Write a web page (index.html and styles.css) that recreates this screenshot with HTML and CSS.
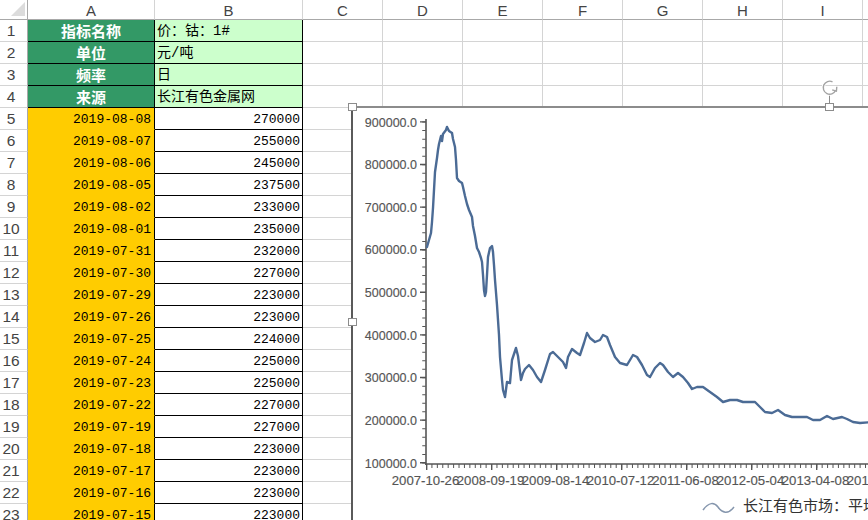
FILE: index.html
```html
<!DOCTYPE html>
<html lang="zh">
<head>
<meta charset="utf-8">
<title>Sheet</title>
<link rel="stylesheet" href="styles.css">
</head>
<body>
<div class="page">
  <div class="sheet">
    <div class="ch corner"></div>
    <div class="ch">A</div><div class="ch">B</div><div class="ch">C</div><div class="ch">D</div><div class="ch">E</div><div class="ch">F</div><div class="ch">G</div><div class="ch">H</div><div class="ch">I</div><div class="ch"></div>

    <div class="rh">1</div><div class="c hd">指标名称</div><div class="c info">价：钴：1#</div>
    <div class="empty"></div>
    <div class="rh">2</div><div class="c hd">单位</div><div class="c info">元/吨</div>
    <div class="rh">3</div><div class="c hd">频率</div><div class="c info">日</div>
    <div class="rh">4</div><div class="c hd">来源</div><div class="c info">长江有色金属网</div>
    <div class="rh">5</div><div class="c dt">2019-08-08</div><div class="c num">270000</div>
    <div class="rh">6</div><div class="c dt">2019-08-07</div><div class="c num">255000</div>
    <div class="rh">7</div><div class="c dt">2019-08-06</div><div class="c num">245000</div>
    <div class="rh">8</div><div class="c dt">2019-08-05</div><div class="c num">237500</div>
    <div class="rh">9</div><div class="c dt">2019-08-02</div><div class="c num">233000</div>
    <div class="rh">10</div><div class="c dt">2019-08-01</div><div class="c num">235000</div>
    <div class="rh">11</div><div class="c dt">2019-07-31</div><div class="c num">232000</div>
    <div class="rh">12</div><div class="c dt">2019-07-30</div><div class="c num">227000</div>
    <div class="rh">13</div><div class="c dt">2019-07-29</div><div class="c num">223000</div>
    <div class="rh">14</div><div class="c dt">2019-07-26</div><div class="c num">223000</div>
    <div class="rh">15</div><div class="c dt">2019-07-25</div><div class="c num">224000</div>
    <div class="rh">16</div><div class="c dt">2019-07-24</div><div class="c num">225000</div>
    <div class="rh">17</div><div class="c dt">2019-07-23</div><div class="c num">225000</div>
    <div class="rh">18</div><div class="c dt">2019-07-22</div><div class="c num">227000</div>
    <div class="rh">19</div><div class="c dt">2019-07-19</div><div class="c num">227000</div>
    <div class="rh">20</div><div class="c dt">2019-07-18</div><div class="c num">223000</div>
    <div class="rh">21</div><div class="c dt">2019-07-17</div><div class="c num">223000</div>
    <div class="rh">22</div><div class="c dt">2019-07-16</div><div class="c num">223000</div>
    <div class="rh">23</div><div class="c dt">2019-07-15</div><div class="c num">223000</div>
  </div>

  <div class="chart">
    <svg class="chart-svg" width="516" height="413" viewBox="352 107 516 413">
      <!-- chart frame -->
      <line x1="352" y1="107" x2="870" y2="107" stroke="#8c8c8c" stroke-width="2"/>
      <line x1="352" y1="107" x2="352" y2="522" stroke="#5a5a5a" stroke-width="2"/>

      <!-- y axis -->
      <line x1="426" y1="119" x2="426" y2="465" stroke="#555" stroke-width="1.6"/>
      <line x1="424" y1="463.4" x2="424" y2="118" stroke="#555" stroke-width="3.5" stroke-dasharray="1 7.52"/>
      <line x1="423" y1="463.4" x2="423" y2="118" stroke="#555" stroke-width="6" stroke-dasharray="1.4 41.2"/>
      <g class="ylab">
        <text x="417" y="126.5">900000.0</text>
        <text x="417" y="169">800000.0</text>
        <text x="417" y="211.5">700000.0</text>
        <text x="417" y="254">600000.0</text>
        <text x="417" y="297">500000.0</text>
        <text x="417" y="339.5">400000.0</text>
        <text x="417" y="382">300000.0</text>
        <text x="417" y="424.5">200000.0</text>
        <text x="417" y="467.5">100000.0</text>
      </g>

      <!-- x axis -->
      <line x1="425" y1="464" x2="870" y2="464" stroke="#555" stroke-width="1.6"/>
      <line x1="426" y1="466" x2="870" y2="466" stroke="#555" stroke-width="4" stroke-dasharray="1 4.42"/>
      <line x1="426" y1="467" x2="870" y2="467" stroke="#555" stroke-width="6" stroke-dasharray="1.4 63.6"/>
      <g class="xlab">
        <text x="425.5" y="485">2007-10-26</text>
        <text x="490.5" y="485">2008-09-19</text>
        <text x="555.5" y="485">2009-08-14</text>
        <text x="620.5" y="485">2010-07-12</text>
        <text x="685.5" y="485">2011-06-08</text>
        <text x="750.5" y="485">2012-05-04</text>
        <text x="815.5" y="485">2013-04-08</text>
        <text x="880.5" y="485">2014-03-04</text>
      </g>

      <!-- series -->
      <polyline class="series" points="427,247 429,240 431,233 432,222 433,208 434,190 435,172 437,158 438,150 439,144 441,136 442,141 443,134 446,130 447,127 449,131 452,133 453,139 455,147 456,160 457,178 459,181 462,183 463,187 465,196 467,204 469,210 472,217 473,226 475,236 477,248 479,252 481,258 482,262 483,275 484,290 485,296 486,292 487,275 488,257 490,248 492,246 493,252 494,265 495,280 497,305 499,335 500,357 502,380 503,390 505,397 507,382 510,383 512,360 516,348 518,356 520,372 521,380 523,373 525,369 529,365 533,370 537,377 541,382 545,370 550,354 553,352 558,357 563,362 566,368 568,357 572,349 577,353 580,355 584,343 587,333 590,338 595,342 600,340 603,335 607,337 610,345 615,357 620,363 627,365 633,355 637,357 642,365 647,375 650,377 655,368 660,363 663,365 668,372 673,377 678,373 683,377 688,383 692,389 697,387 703,387 710,392 717,397 723,402 730,400 737,400 743,402 750,402 755,402 760,407 765,412 772,413 778,410 785,415 792,417 798,417 807,417 813,420 820,420 827,416 833,419 842,417 847,419 853,422 860,423 872,422"/>

      <!-- legend -->
      <path d="M703,510 C709,502 714,502 718,507 C722,513 728,515 734,507" fill="none" stroke="#8596ad" stroke-width="1.5"/>
      <text class="legend" x="743" y="511">长江有色市场：平均价</text>

      <!-- selection handles -->
      <rect class="handle" x="348.5" y="103.5" width="8" height="7"/>
      <rect class="handle" x="348.5" y="318.5" width="8" height="7"/>
      <line x1="829.5" y1="94" x2="829.5" y2="103" stroke="#8c8c8c" stroke-width="1"/>
      <rect class="handle" x="825.5" y="103.5" width="8" height="7"/>
      <!-- rotation handle -->
      <path d="M835.6,90.5 A6.5,6.5 0 1 1 832.5,81.8" fill="none" stroke="#ffffff" stroke-width="3.2"/>
      <path d="M835.6,90.5 A6.5,6.5 0 1 1 832.5,81.8" fill="none" stroke="#a3a3a3" stroke-width="1.4"/>
      <path d="M832.2,89.8 L836.4,91.2 L836.8,86.8" fill="none" stroke="#a3a3a3" stroke-width="1.4" stroke-linejoin="round"/>
    </svg>
  </div>
</div>
</body>
</html>
```

FILE: styles.css
```css
html, body {
  margin: 0;
  padding: 0;
  background: #fff;
}
.page {
  position: relative;
  width: 868px;
  height: 520px;
  overflow: hidden;
  font-family: "Liberation Sans", Arial, sans-serif;
}
.sheet {
  display: grid;
  grid-template-columns: 28px 127px 148px repeat(8, 80px);
  grid-template-rows: 20px repeat(23, 22px);
}
.ch {
  box-sizing: border-box;
  border-right: 1px solid #d4d4d4;
  border-bottom: 1px solid #a8a8a8;
  display: flex;
  align-items: center;
  justify-content: center;
  font-size: 15px;
  color: #444;
  padding-top: 1px;
}
.corner {
  position: relative;
  border-right: 1px solid #a8a8a8;
}
.corner::after {
  content: "";
  position: absolute;
  right: 2px;
  bottom: 3px;
  width: 14px;
  height: 14px;
  background: #dcdcdc;
  clip-path: polygon(100% 0, 100% 100%, 0 100%);
}
.rh {
  box-sizing: border-box;
  border-right: 1px solid #a8a8a8;
  border-bottom: 1px solid #d4d4d4;
  display: flex;
  align-items: center;
  justify-content: center;
  padding-right: 5px;
  padding-top: 1px;
  font-size: 15.5px;
  color: #444;
}
.c {
  box-sizing: border-box;
  border-right: 1px solid #000;
  border-bottom: 1px solid #000;
  display: flex;
  align-items: flex-end;
  padding-bottom: 2px;
  white-space: nowrap;
  overflow: hidden;
}
.hd {
  background: #339966;
  color: #fff;
  font-family: "Noto Sans CJK SC", sans-serif;
  font-weight: bold;
  font-size: 15px;
  justify-content: center;
  align-items: center;
  padding-bottom: 0;
  line-height: 1;
}
.info {
  background: #ccffcc;
  font-family: "Liberation Mono", "Noto Sans CJK SC", monospace;
  font-size: 14px;
  padding-left: 2px;
  align-items: center;
  padding-bottom: 0;
  line-height: 1;
  color: #000;
}
.dt {
  background: #ffcc00;
  border-bottom-color: #ffcc00;
  font-family: "Liberation Mono", monospace;
  font-size: 13px;
  justify-content: flex-end;
  padding-right: 3px;
  color: #000;
}
.num {
  background: #fff;
  font-family: "Liberation Mono", monospace;
  font-size: 13px;
  justify-content: flex-end;
  padding-right: 2px;
  color: #000;
}
.empty {
  grid-column: 4 / -1;
  grid-row: 2 / -1;
  background-image:
    linear-gradient(to right, transparent 79px, #d4d4d4 79px),
    linear-gradient(to bottom, transparent 21px, #d4d4d4 21px);
  background-size: 80px 100%, 100% 22px;
}
.chart {
  position: absolute;
  left: 352px;
  top: 107px;
  width: 516px;
  height: 413px;
  background: #fff;
}
.chart-svg {
  display: block;
  overflow: visible;
}
.ylab text {
  font-family: "Liberation Sans", Arial, sans-serif;
  font-size: 12.5px;
  fill: #555;
  stroke: #555;
  stroke-width: 0.15;
  text-anchor: end;
}
.xlab text {
  font-family: "Liberation Sans", Arial, sans-serif;
  font-size: 13.2px;
  fill: #555;
  stroke: #555;
  stroke-width: 0.15;
  text-anchor: middle;
}
.series {
  fill: none;
  stroke: #4b6b95;
  stroke-width: 2.4;
  stroke-linejoin: round;
  stroke-linecap: round;
}
.legend {
  font-family: "Noto Sans CJK SC", sans-serif;
  font-size: 15px;
  fill: #333;
}
.handle {
  fill: #fff;
  stroke: #8c8c8c;
  stroke-width: 1;
}
```
